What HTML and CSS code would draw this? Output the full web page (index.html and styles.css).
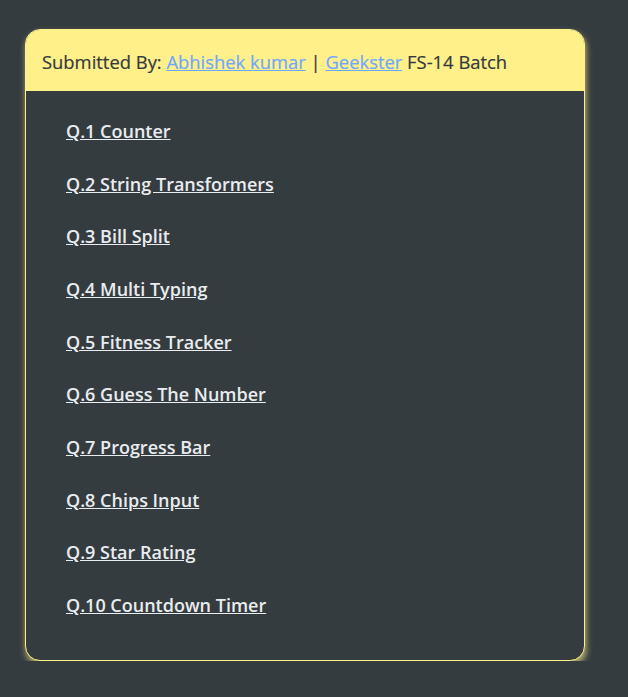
FILE: index.html
```html
<!DOCTYPE html>
<html>
<head>
<meta charset="utf-8">
<link rel="stylesheet" href="styles.css">
</head>
<body>
<div class="card">
  <div class="card-header">Submitted By: <a href="#">Abhishek kumar</a> | <a href="#">Geekster</a> FS-14 Batch</div>
  <ul class="list">
    <li><a href="#">Q.1 Counter</a></li>
    <li><a href="#">Q.2 String Transformers</a></li>
    <li><a href="#">Q.3 Bill Split</a></li>
    <li><a href="#">Q.4 Multi Typing</a></li>
    <li><a href="#">Q.5 Fitness Tracker</a></li>
    <li><a href="#">Q.6 Guess The Number</a></li>
    <li><a href="#">Q.7 Progress Bar</a></li>
    <li><a href="#">Q.8 Chips Input</a></li>
    <li><a href="#">Q.9 Star Rating</a></li>
    <li><a href="#">Q.10 Countdown Timer</a></li>
  </ul>
</div>
</body>
</html>
```
FILE: styles.css
```css
html, body {
  margin: 0;
  padding: 0;
  background: #353c40;
}
body {
  font-family: "Open Sans", "Noto Sans", sans-serif;
  padding: 29px 0 0 25px;
}
.card {
  width: 558px;
  border: 1px solid #fff08a;
  border-radius: 15px;
  overflow: hidden;
  background: #353c40;
  box-shadow: 1px 4px 6px rgba(255, 240, 138, 0.7);
}
.card-header {
  background: #fff08a;
  color: #343a40;
  font-size: 18.4px;
  font-weight: 400;
  line-height: 27px;
  padding: 18px 16px 16px;
  -webkit-text-stroke: 0.2px #343a40;
}
.card-header a {
  color: #6ea8fe;
  text-decoration: underline;
  -webkit-text-stroke: 0.2px #6ea8fe;
}
.list {
  list-style: none;
  margin: 0;
  padding: 27px 40px 41px;
  display: flex;
  flex-direction: column;
  gap: 25.67px;
}
.list li {
  line-height: 27px;
  font-size: 18px;
  font-weight: 600;
}
.list a {
  color: #e9ecef;
  text-decoration: underline;
}
```
